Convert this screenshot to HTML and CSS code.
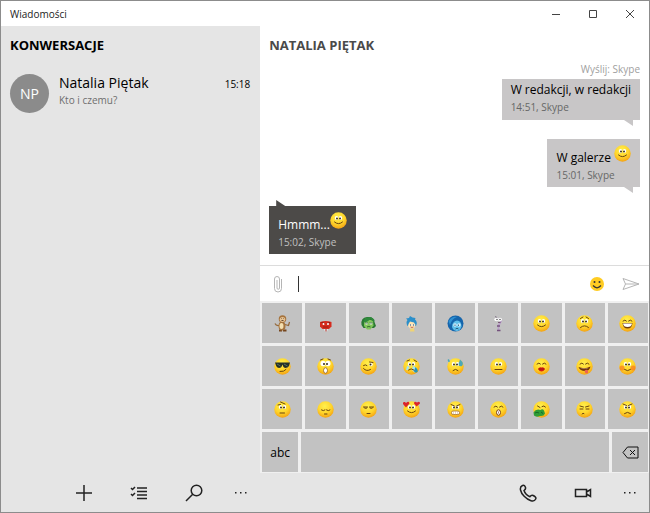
FILE: index.html
```html
<!DOCTYPE html>
<html lang="pl">
<head>
    <meta charset="UTF-8">
    <meta name="viewport" content="width=device-width, initial-scale=1.0">
    <title>Wiadomości</title>
    <link rel="stylesheet" href="styles.css">
</head>
<body>

    <!-- Shared emoticon parts -->
    <svg class="defs" aria-hidden="true">
        <defs>
            <radialGradient id="skin" cx="45%" cy="30%" r="75%">
                <stop offset="0" stop-color="#fff04e"/>
                <stop offset="0.55" stop-color="#ffd52b"/>
                <stop offset="1" stop-color="#f29a10"/>
            </radialGradient>
            <symbol id="face" viewBox="0 0 34 34">
                <circle cx="17" cy="17" r="16.5" fill="url(#skin)"/>
            </symbol>
            <symbol id="eyes" viewBox="0 0 34 34">
                <ellipse cx="13" cy="12" rx="3.4" ry="4" fill="#fff"/>
                <ellipse cx="21" cy="12" rx="3.4" ry="4" fill="#fff"/>
                <circle cx="14" cy="13" r="1.9" fill="#3a2c10"/>
                <circle cx="20" cy="13" r="1.9" fill="#3a2c10"/>
            </symbol>
            <symbol id="closed" viewBox="0 0 34 34">
                <path class="line" d="M8 12q4-4 7 0M19 12q4-4 7 0"/>
            </symbol>
            <symbol id="smile" viewBox="0 0 34 34">
                <use href="#face"/><use href="#eyes"/>
                <path class="line" d="M9 20q8 7 16 0"/>
            </symbol>
        </defs>
    </svg>

    <div class="window">
        <header class="titlebar">
            <span class="app-name">Wiadomości</span>
            <div class="window-buttons">
                <button type="button" aria-label="Minimalizuj"><svg width="10" height="10"><path d="M1 5.500h8"/></svg></button>
                <button type="button" aria-label="Maksymalizuj"><svg width="10" height="10"><path d="M1.500 1.500h7v7h-7z"/></svg></button>
                <button type="button" aria-label="Zamknij"><svg width="10" height="10"><path d="M1 1l8 8M9 1l-8 8"/></svg></button>
            </div>
        </header>

        <div class="columns">
            <aside class="sidebar">
                <h1>KONWERSACJE</h1>
                <a href="#chat" class="conversation">
                    <span class="avatar">NP</span>
                    <span class="summary">
                        <span class="name">Natalia Piętak</span>
                        <span class="preview">Kto i czemu?</span>
                    </span>
                    <time>15:18</time>
                </a>
                <nav class="toolbar toolbar-left">
                    <button type="button" aria-label="Nowa wiadomość"><svg width="18" height="18"><path d="M9 1v16M1 9h16"/></svg></button>
                    <button type="button" aria-label="Zaznacz"><svg width="18" height="18"><path d="M7 4h10M7 7.500h10M7 11h10M7 14.500h10M1 4l1.500 1.500L5 3M1 10l1.500 1.500L5 9"/></svg></button>
                    <button type="button" aria-label="Szukaj"><svg width="18" height="18"><circle cx="11.500" cy="6.500" r="5.300"/><path d="M7.700 10.300L1 17"/></svg></button>
                    <button type="button" class="more" aria-label="Więcej"><svg width="14" height="4"><path class="dots" d="M1 1h1.500v1.500H1zM6 1h1.500v1.500H6zM11 1h1.500v1.500H11z"/></svg></button>
                </nav>
            </aside>

            <main class="chat" id="chat">
                <h2>NATALIA PIĘTAK</h2>

                <div class="messages">
                    <p class="via">Wyślij: Skype</p>
                    <div class="bubble sent">
                        <p>W redakcji, w redakcji</p>
                        <time>14:51, Skype</time>
                    </div>
                    <div class="bubble sent">
                        <p>W galerze <svg class="emo"><use href="#smile"/></svg></p>
                        <time>15:01, Skype</time>
                    </div>
                    <div class="bubble received">
                        <p>Hmmm...<svg class="emo"><use href="#smile"/></svg></p>
                        <time>15:02, Skype</time>
                    </div>
                </div>

                <form class="compose">
                    <button type="button" aria-label="Dołącz plik"><svg width="10" height="18"><path d="M8.500 4v9.500a3.500 3.500 0 0 1-7 0V4a2.500 2.500 0 0 1 5 0v9a1.200 1.200 0 0 1-2.500 0V5"/></svg></button>
                    <span class="caret"></span>
                    <input type="text" aria-label="Wiadomość">
                    <button type="button" aria-label="Emotikony"><svg width="14" height="14" viewBox="0 0 28 28"><circle class="plain" cx="14" cy="14" r="14"/><circle class="ink" cx="9" cy="10" r="2"/><circle class="ink" cx="19" cy="10" r="2"/><path class="grin" d="M6 17q8 9 16 0"/></svg></button>
                    <button type="submit" class="send" aria-label="Wyślij"><svg width="18" height="14"><path d="M1 1.500L17 7 1 12.500 3.500 7zM3.500 7H17"/></svg></button>
                </form>

                <div class="keyboard">
                    <div class="keys">
                        <button type="button" aria-label="Małpa"><svg viewBox="0 0 34 34">
                            <path d="M10 21q-6 1-8-4M22 19l7 2 2-7" fill="none" stroke="#94683a" stroke-width="2.500"/>
                            <path d="M10 31h6M18 31h7" stroke="#74451d" stroke-width="4"/>
                            <ellipse cx="16" cy="22" rx="7" ry="9" fill="#a5733d"/>
                            <ellipse cx="15" cy="22" rx="4" ry="6" fill="#f4dfb0"/>
                            <circle cx="17" cy="8" r="7.500" fill="#a5733d"/>
                            <ellipse cx="17" cy="9" rx="5.500" ry="5" fill="#e5c293"/>
                            <path d="M15 7v1M19 7v1M15 11h4" stroke="#41250f" stroke-width="1.500"/>
                        </svg></button>
                        <button type="button" aria-label="Gniew"><svg viewBox="0 0 34 34">
                            <path d="M6 14q11-4 23 0v9l-5 5H11l-5-5z" fill="#d52b1e"/>
                            <path d="M9 15l6 2M26 15l-6 2" stroke="#61100c" stroke-width="1.500"/>
                            <circle cx="13" cy="18" r="2" fill="#fff"/><circle cx="22" cy="18" r="2" fill="#fff"/>
                            <path d="M12 24h11" stroke="#8a1610" stroke-width="1.500"/>
                            <path d="M14 28h8l-2 5h-4z" fill="#eee"/><path d="M17 28h2v5h-2z" fill="#a21d15"/>
                        </svg></button>
                        <button type="button" aria-label="Odraza"><svg viewBox="0 0 34 34">
                            <path d="M3 20Q1 5 14 4q15-1 15 10l3 8-4 4H7z" fill="#2b7a33"/>
                            <path d="M8 12q9-5 18 0l1 9-6 8h-7l-6-7z" fill="#83c65c"/>
                            <path d="M6 15q10 0 15-8 5 3 6 9l2-6-7-6-12 2z" fill="#2f8a3c"/>
                            <ellipse cx="13" cy="17" rx="3" ry="2" fill="#fff"/><ellipse cx="22" cy="17" rx="3" ry="2" fill="#fff"/>
                            <path d="M10 16h6M19 16h6M14 24q4-2 7 0" fill="none" stroke="#174c20" stroke-width="1.500"/>
                        </svg></button>
                        <button type="button" aria-label="Radość"><svg viewBox="0 0 34 34">
                            <path d="M9 22Q5 14 9 10L6 7l6-1 2-4 5 3 6 1-1 3q6 5 2 13z" fill="#2b8fca"/>
                            <path d="M11 18l3-5 8 2 3 5-3 7h-8l-4-5z" fill="#ffe2b0"/>
                            <circle cx="15" cy="20" r="2.200" fill="#fff"/><circle cx="21" cy="20" r="2.200" fill="#fff"/>
                            <circle cx="15" cy="20" r="1.300" fill="#356278"/><circle cx="21" cy="20" r="1.300" fill="#356278"/>
                            <path d="M15 24q3 2 6 0" fill="none" stroke="#ad4936" stroke-width="1.500"/>
                            <path d="M15 27h7l1 6h-9z" fill="#f0d473"/>
                        </svg></button>
                        <button type="button" aria-label="Smutek"><svg viewBox="0 0 34 34">
                            <circle cx="17" cy="17" r="16" fill="#1565ac"/>
                            <path d="M3 13Q9 2 20 4q-10 3-14 16z" fill="#2e91d3"/>
                            <path d="M10 24q0-11 10-13 9 1 9 12-3 9-10 9-7-1-9-8z" fill="#60bfe9"/>
                            <circle cx="16" cy="20" r="3.500" fill="#d5f1ff"/><circle cx="24" cy="20" r="3.500" fill="#d5f1ff"/>
                            <path d="M16 19v3M23 19v3M17 28q3-3 6 0" fill="none" stroke="#174461" stroke-width="1.500"/>
                        </svg></button>
                        <button type="button" aria-label="Strach"><svg viewBox="0 0 34 34">
                            <path d="M13 8q10-2 9 4-2 6-5 8v10" fill="none" stroke="#b8a0c8" stroke-width="3.500"/>
                            <path d="M10 3l4 2" stroke="#66536f" stroke-width="1.500"/>
                            <ellipse cx="13" cy="9" rx="4.500" ry="3.500" fill="#fff"/><ellipse cx="20" cy="9" rx="4" ry="3.500" fill="#fff"/>
                            <circle cx="14" cy="9" r="1.300" fill="#333"/><circle cx="20" cy="9" r="1.300" fill="#333"/>
                            <path d="M16 15h5" stroke="#66385e" stroke-width="1.500"/><path d="M14 22h6M14 31h7" stroke="#75527d" stroke-width="3"/>
                        </svg></button>
                        <button type="button" aria-label="Uśmiech"><svg viewBox="0 0 34 34"><use href="#smile"/></svg></button>
                        <button type="button" aria-label="Smutny"><svg viewBox="0 0 34 34"><use href="#face"/><use href="#eyes"/><path class="line" d="M9 25q8-7 16 0M9 7l5-3M20 4l5 3"/></svg></button>
                        <button type="button" aria-label="Śmiech"><svg viewBox="0 0 34 34"><use href="#face"/><use href="#closed"/><path d="M7 16h20q-1 11-10 11T7 16z" fill="#713c0c"/><path d="M8 17h18q-1 7-9 7t-9-7z" fill="#fff"/></svg></button>

                        <button type="button" aria-label="Fajny"><svg viewBox="0 0 34 34"><use href="#face"/><path d="M2 9h30l-2 7q-2 4-8 4-4-1-5-7-2 7-7 7-5-1-6-5z" fill="#253029"/><path d="M6 12l7 4M20 12l7 4" stroke="#56725c" stroke-width="2"/><path class="line" d="M12 27q8 1 12-4"/></svg></button>
                        <button type="button" aria-label="Zaskoczony"><svg viewBox="0 0 34 34"><use href="#face"/><ellipse cx="12" cy="11" rx="5" ry="5.500" fill="#fff"/><ellipse cx="22" cy="11" rx="5" ry="5.500" fill="#fff"/><circle cx="14" cy="12" r="2" fill="#332819"/><circle cx="20" cy="12" r="2" fill="#332819"/><ellipse cx="17" cy="25" rx="4" ry="5.500" fill="#fff" stroke="#8f5714" stroke-width="1.500"/><path class="line" d="M7 4l5-2M22 2l5 2"/></svg></button>
                        <button type="button" aria-label="Oczko"><svg viewBox="0 0 34 34"><use href="#face"/><path class="line" d="M7 15q4-3 7 0M7 21q6 7 14 2M19 8l7 1"/><circle cx="22" cy="13" r="3.500" fill="#fff"/><circle cx="21" cy="13" r="2" fill="#3a2c10"/></svg></button>
                        <button type="button" aria-label="Płacz"><svg viewBox="0 0 34 34"><use href="#face"/><use href="#eyes"/><path d="M8 16q3-1 5 3l-3 5H6zM20 16q10 4 8 11l-5 2-5-5z" fill="#a5e5f1"/><path d="M25 18q6 6 4 10-6 3-7-2z" fill="#2495bd"/><path class="line" d="M8 6l5-2M22 4l5 3M11 24q5-5 11 0"/></svg></button>
                        <button type="button" aria-label="Spocony"><svg viewBox="0 0 34 34"><use href="#face"/><use href="#eyes"/><path class="line" d="M12 25q5-5 10 0"/><path d="M26 3q9 7 4 13-7 2-7-4zM2 2q5 2 3 6-5 0-3-6z" fill="#4aa8b9"/></svg></button>
                        <button type="button" aria-label="Bez słów"><svg viewBox="0 0 34 34"><use href="#face"/><use href="#eyes"/><path class="line" d="M10 23h14"/></svg></button>
                        <button type="button" aria-label="Całus"><svg viewBox="0 0 34 34"><use href="#face"/><use href="#closed"/><path d="M10 22q3-5 7-3 4-2 7 3-3 5-7 5t-7-5z" fill="#d91e17"/><path d="M11 22h12" stroke="#8b160e" stroke-width="1.500"/></svg></button>
                        <button type="button" aria-label="Język"><svg viewBox="0 0 34 34"><use href="#face"/><use href="#closed"/><path d="M5 18q12 5 24-1-2 9-11 9Q8 26 5 18z" fill="#713409"/><path d="M9 20q8 3 16 0-3 2-8 2t-8-2z" fill="#fff"/><path d="M17 25q4-3 7 0v5q-4 2-6-1z" fill="#ed6350"/></svg></button>
                        <button type="button" aria-label="Rumieniec"><svg viewBox="0 0 34 34"><use href="#face"/><circle cx="6" cy="20" r="5" fill="#fa7a20" opacity="0.7"/><circle cx="28" cy="20" r="5" fill="#fa7a20" opacity="0.7"/><use href="#eyes"/><path class="line" d="M11 23q6 5 12 0"/></svg></button>

                        <button type="button" aria-label="Zastanowienie"><svg viewBox="0 0 34 34"><use href="#face"/><use href="#eyes"/><path class="line" d="M8 8l5-1M13 2l9 4M12 24h9"/></svg></button>
                        <button type="button" aria-label="Senny"><svg viewBox="0 0 34 34"><use href="#face"/><path class="line" d="M9 18q4 3 7 0M19 18q4 3 7 0M15 26h5"/></svg></button>
                        <button type="button" aria-label="Znudzony"><svg viewBox="0 0 34 34"><use href="#face"/><path class="line" d="M7 12h8M19 12h8M9 14q3 2 5 0M20 14q3 2 5 0M14 25h6"/></svg></button>
                        <button type="button" aria-label="Zakochany"><svg viewBox="0 0 34 34"><use href="#smile"/><path d="M6 13L0 6q-1-5 4-4l2 2q6-5 7 1zM27 11l-5-6q0-5 4-3l2 1q6-4 6 2z" fill="#db242c"/></svg></button>
                        <button type="button" aria-label="Zły"><svg viewBox="0 0 34 34"><use href="#face"/><use href="#eyes"/><path class="line" d="M8 7l7 3M26 7l-7 3"/><rect x="9" y="20" width="16" height="7" rx="3" fill="#fff" stroke="#a86a1c" stroke-width="1.500"/><path d="M13 20v7M17 20v7M21 20v7" stroke="#c9ab83"/></svg></button>
                        <button type="button" aria-label="Ziewanie"><svg viewBox="0 0 34 34"><use href="#face"/><use href="#closed"/><ellipse cx="17" cy="23" rx="4" ry="5.500" fill="#fff" stroke="#7b400f" stroke-width="2"/><path d="M17 21v4" stroke="#aa7770" stroke-width="2"/></svg></button>
                        <button type="button" aria-label="Mdłości"><svg viewBox="0 0 34 34"><use href="#face"/><path class="line" d="M9 10l5 3M18 11q4-3 7 1"/><path d="M1 23q5-8 14-5 4-3 7 1l2 6q-2 6-10 5-8 3-12-1z" fill="#2f9d36"/><path d="M4 24q4-3 8 0M16 22l4 3" stroke="#176a28" stroke-width="2" fill="none"/></svg></button>
                        <button type="button" aria-label="Cisza"><svg viewBox="0 0 34 34"><use href="#face"/><path class="line" d="M8 10l7 2M26 10l-7 2M8 16h6M20 16h6M12 26q2-3 4-1"/></svg></button>
                        <button type="button" aria-label="Zmartwiony"><svg viewBox="0 0 34 34"><use href="#face"/><use href="#eyes"/><path class="line" d="M8 6l7 3M26 6l-7 3M11 25q6-5 12 0"/></svg></button>
                    </div>
                    <div class="keys-bottom">
                        <button type="button">abc</button>
                        <button type="button" aria-label="Spacja"></button>
                        <button type="button" aria-label="Usuń"><svg class="backspace" viewBox="0 0 17 13"><path d="M5.500 1H16v11H5.500L1 6.500zM8 4l5 5M13 4L8 9"/></svg></button>
                    </div>
                </div>

                <nav class="toolbar">
                    <button type="button" aria-label="Połącz"><svg width="18" height="18"><path d="M3.500 1.500c1.500-.8 2.500.5 3 2 .5 1.700-.6 2.300-1.500 3 .8 2.500 3.500 5.200 6 6.200.8-1.200 1.600-2 3.200-1.200 1.600.8 3.300 2 2.500 3.500-.8 1.700-2.500 2.300-4.700 1.700C7 15.300 2.300 10 1.500 6 1.100 4 1.700 2.300 3.500 1.500z"/></svg></button>
                    <button type="button" aria-label="Rozmowa wideo"><svg width="18" height="10"><path d="M1.500 1.500h11v7h-11zM12.500 4L16.500 1.500v7L12.500 6"/></svg></button>
                    <button type="button" class="more" aria-label="Więcej"><svg width="14" height="4"><path class="dots" d="M1 1h1.500v1.500H1zM6 1h1.500v1.500H6zM11 1h1.500v1.500H11z"/></svg></button>
                </nav>
            </main>
        </div>
    </div>

</body>
</html>
```
FILE: styles.css
```css
/* General Styling */
* {
    box-sizing: border-box;
}

body {
    font-family: "Segoe UI", "Open Sans", "Noto Sans", sans-serif;
    font-size: 12px;
    color: #000;
    background-color: #fff;
    margin: 0;
}

h1, h2, p {
    margin: 0;
}

button {
    display: flex;
    align-items: center;
    justify-content: center;
    font: inherit;
    color: inherit;
    background: none;
    border: none;
    padding: 0;
    cursor: pointer;
}

svg {
    fill: none;
    stroke: #222;
    flex: none;
}

.defs {
    position: absolute;
    width: 0;
    height: 0;
}

.window {
    display: flex;
    flex-direction: column;
    min-height: 100vh;
    border: 1px solid #8c8c8c;
}

/* Title bar */
.titlebar {
    display: flex;
    align-items: center;
    justify-content: space-between;
    height: 25px;
    padding: 0 1px 0 9px;
}

.app-name {
    font-size: 10px;
    color: #222;
}

.window-buttons {
    display: flex;
}

.window-buttons button {
    width: 37px;
    height: 25px;
}

.window-buttons svg {
    stroke: #444;
}

.columns {
    display: grid;
    grid-template-columns: 2fr 3fr;
    flex: 1;
}

/* Conversation list */
.sidebar {
    display: flex;
    flex-direction: column;
    background-color: #e5e5e5;
}

h1, h2 {
    font-size: 13px;
    line-height: 18px;
    font-weight: bold;
    padding: 10px 9px;
}

h2 {
    color: #4a4a4a;
}

.conversation {
    display: flex;
    gap: 10px;
    padding: 10px 10px 10px 9px;
    color: #000;
    text-decoration: none;
}

.avatar {
    display: flex;
    align-items: center;
    justify-content: center;
    width: 39px;
    height: 39px;
    border-radius: 50%;
    background-color: #8b8b8b;
    color: #fff;
    font-size: 14px;
}

.summary {
    display: flex;
    flex-direction: column;
    flex: 1;
}

.name {
    font-size: 14px;
    line-height: 18px;
}

.preview {
    font-size: 10px;
    line-height: 16px;
    color: #6e6e6e;
}

.conversation time {
    font-size: 10px;
    line-height: 20px;
}

.toolbar {
    display: flex;
    justify-content: flex-end;
    height: 39px;
    background-color: #e5e5e5;
}

.toolbar-left {
    margin-top: auto;
}

.toolbar button {
    width: 55px;
}

.toolbar .more {
    width: 39px;
}

.toolbar svg {
    stroke-width: 1.5;
}

.dots {
    fill: #222;
    stroke: none;
}

/* Messages */
.chat {
    display: flex;
    flex-direction: column;
}

.messages {
    display: flex;
    flex-direction: column;
    align-items: flex-start;
    flex: 1;
    padding: 0 9px;
}

.via {
    align-self: flex-end;
    margin-bottom: 5px;
    font-size: 10px;
    line-height: 10px;
    color: #a0a0a0;
}

.bubble {
    position: relative;
    padding: 2px 9px 4px;
    margin-bottom: 19px;
}

.bubble:last-child {
    margin-bottom: 0;
}

.bubble p {
    display: flex;
    align-items: flex-end;
    white-space: pre;
    line-height: 18px;
}

.bubble time {
    display: block;
    font-size: 10px;
    line-height: 17px;
}

.bubble:has(.emo) {
    padding-top: 6px;
    padding-bottom: 3px;
}

.bubble .emo {
    margin-bottom: 5px;
}

.sent {
    align-self: flex-end;
    background-color: #c8c6c7;
}

.sent time {
    color: #666;
}

.received {
    background-color: #4c4a48;
    color: #fff;
}

.received time {
    color: #c0c0c0;
}

.bubble::after {
    content: "";
    position: absolute;
    width: 9px;
    height: 6px;
}

.sent::after {
    top: 100%;
    right: 7px;
    background-color: #c8c6c7;
    clip-path: polygon(0 0, 100% 0, 100% 100%);
}

.received::after {
    bottom: 100%;
    left: 7px;
    background-color: #4c4a48;
    clip-path: polygon(0 0, 100% 100%, 0 100%);
}

.compose {
    display: flex;
    align-items: center;
    height: 36px;
    padding: 0 9px 0 13px;
    border-top: 1px solid #dcdcdc;
}

.compose svg {
    stroke: #b5b5b5;
}

.caret {
    width: 1px;
    height: 16px;
    margin-left: 15px;
    background-color: #333;
}

.compose input {
    flex: 1;
    min-width: 0;
    height: 24px;
    border: none;
    outline: none;
    font: inherit;
}

.send {
    margin-left: 18px;
}

.plain {
    fill: #ffcc22;
    stroke: none;
}

.ink {
    fill: #333;
    stroke: none;
}

.compose .grin {
    stroke: #333;
    stroke-width: 2.5;
}

/* Emoticon keyboard */
.emo, .keys svg {
    width: 17px;
    height: 17px;
    stroke: none;
}

.line {
    fill: none;
    stroke: #69430f;
    stroke-width: 2;
    stroke-linecap: round;
}

.keyboard {
    display: flex;
    flex-direction: column;
    gap: 3px;
    padding: 2px 1px 1px 2px;
    background-color: #f0f0f0;
}

.keys {
    display: grid;
    grid-template-columns: repeat(9, 1fr);
    gap: 3px;
}

.keys-bottom {
    display: grid;
    grid-template-columns: 36px 1fr 36px;
    gap: 3px;
}

.keyboard button {
    height: 40px;
    background-color: #c2c2c2;
}

.keyboard button:hover {
    background-color: #b4b4b4;
}

.keyboard .backspace {
    width: 17px;
    height: 13px;
    stroke: #111;
}
```
